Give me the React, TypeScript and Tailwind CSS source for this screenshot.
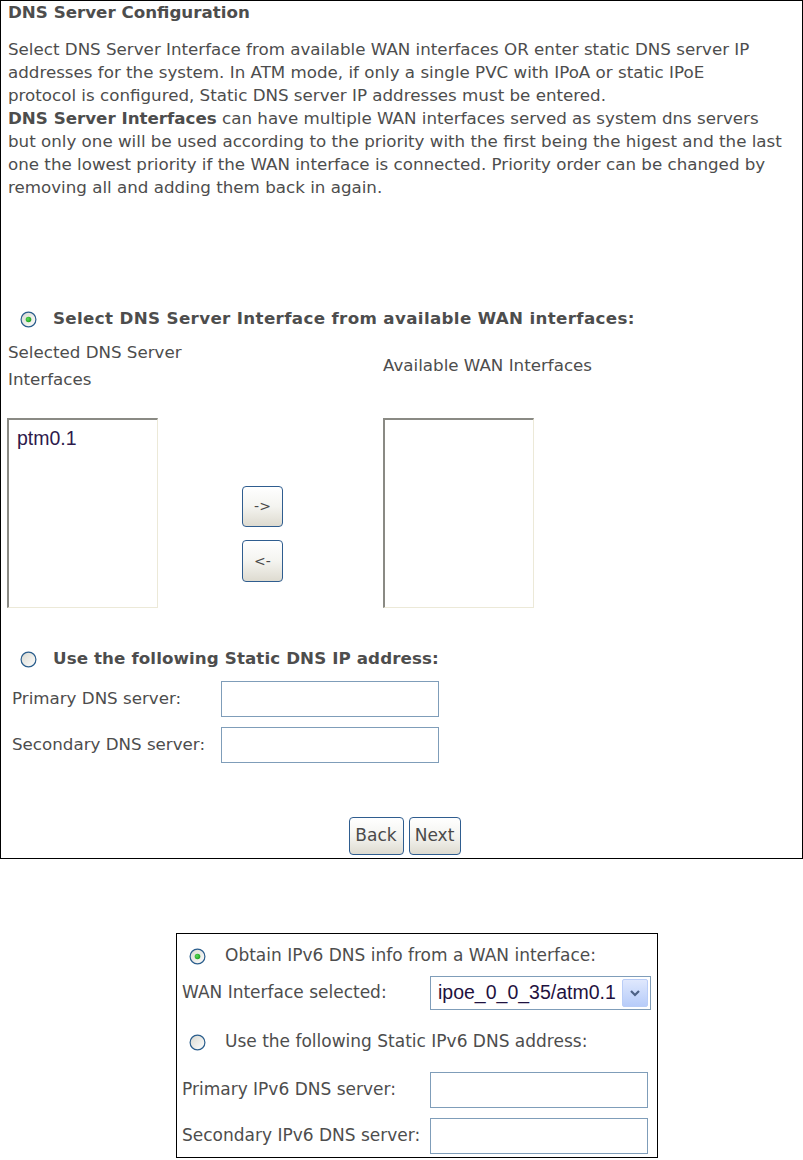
import React from "react";

const font = { fontFamily: '"DejaVu Sans", Verdana, Tahoma, sans-serif' };
const arial = { fontFamily: '"Liberation Sans", Arial, sans-serif' };

function Radio({ checked, id }: { checked?: boolean; id: string }) {
  return (
    <svg width="17" height="17" viewBox="0 0 17 17" className="shrink-0">
      <defs>
        <linearGradient id={`bg-${id}`} x1="0" y1="0" x2="1" y2="1">
          <stop offset="0" stopColor="#d8d8d0" />
          <stop offset="1" stopColor="#ffffff" />
        </linearGradient>
        <radialGradient id={`dot-${id}`} cx="0.4" cy="0.4" r="0.6">
          <stop offset="0" stopColor="#5ada5a" />
          <stop offset="1" stopColor="#21a121" />
        </radialGradient>
      </defs>
      <circle cx="8.5" cy="8.5" r="7.4" fill={`url(#bg-${id})`} stroke="#2a5d8c" strokeWidth="1.2" />
      {checked && <circle cx="8.5" cy="8.5" r="2.8" fill={`url(#dot-${id})`} />}
    </svg>
  );
}

function XpButton({ children, className }: { children: React.ReactNode; className: string }) {
  return (
    <div
      className={`flex items-center justify-center rounded-[4px] border border-[#2f5d8f] bg-gradient-to-b from-[#ffffff] via-[#f4f4f0] to-[#dedbd0] text-[#4a4a4a] ${className}`}
    >
      {children}
    </div>
  );
}

function ListBox({ items }: { items: string[] }) {
  return (
    <div className="w-[151px] h-[190px] bg-white border-l-2 border-t-2 border-r border-b border-l-[#8a8a84] border-t-[#8a8a84] border-r-[#ece9d8] border-b-[#ece9d8] pl-[8px] pt-[6px]">
      {items.map((it) => (
        <div key={it} className="text-[19.5px] leading-[24px] text-[#2e1a4c]" style={arial}>
          {it}
        </div>
      ))}
    </div>
  );
}

function TextBox({ className = "" }: { className?: string }) {
  return <div className={`w-[218px] h-[36px] border border-[#7f9db9] bg-white ${className}`} />;
}

export default function App() {
  return (
    <div className="w-[803px] h-[1160px] bg-white text-[#4d4d4d] text-[16.7px]" style={font}>
      {/* Box 1 */}
      <div className="w-[803px] h-[859px] border border-black flex flex-col">
        <div className="pl-[7px] leading-[22px] font-bold whitespace-nowrap">DNS Server Configuration</div>
        <div className="pl-[7px] mt-[15px] leading-[23px] whitespace-nowrap">
          <div>Select DNS Server Interface from available WAN interfaces OR enter static DNS server IP</div>
          <div>addresses for the system. In ATM mode, if only a single PVC with IPoA or static IPoE</div>
          <div>protocol is configured, Static DNS server IP addresses must be entered.</div>
          <div>
            <b>DNS Server Interfaces</b> can have multiple WAN interfaces served as system dns servers
          </div>
          <div>but only one will be used according to the priority with the first being the higest and the last</div>
          <div>one the lowest priority if the WAN interface is connected. Priority order can be changed by</div>
          <div>removing all and adding them back in again.</div>
        </div>

        <div className="mt-[108px] h-[24px] flex items-center pl-[19px] gap-[16px]">
          <Radio checked id="r1" />
          <span className="font-bold whitespace-nowrap tracking-[0.35px]">Select DNS Server Interface from available WAN interfaces:</span>
        </div>

        <div className="mt-[8px] flex items-center">
          <div className="w-[382px] pl-[7px] leading-[27px]">
            <div>Selected DNS Server</div>
            <div>Interfaces</div>
          </div>
          <div>Available WAN Interfaces</div>
        </div>

        <div className="mt-[25px] flex pl-[6px]">
          <div className="w-[235px]">
            <ListBox items={["ptm0.1"]} />
          </div>
          <div className="w-[141px] flex flex-col gap-[13px] pt-[68px]">
            <XpButton className="w-[41px] h-[41px] text-[14px]">-&gt;</XpButton>
            <XpButton className="w-[41px] h-[42px] text-[14px]">&lt;-</XpButton>
          </div>
          <div>
            <ListBox items={[]} />
          </div>
        </div>

        <div className="mt-[39px] h-[24px] flex items-center pl-[19px] gap-[16px]">
          <Radio id="r2" />
          <span className="font-bold whitespace-nowrap tracking-[0.1px]">Use the following Static DNS IP address:</span>
        </div>

        <div className="mt-[10px] flex items-center pl-[11px]">
          <div className="w-[209px] whitespace-nowrap">Primary DNS server:</div>
          <TextBox />
        </div>
        <div className="mt-[10px] flex items-center pl-[11px]">
          <div className="w-[209px] whitespace-nowrap">Secondary DNS server:</div>
          <TextBox className="h-[35px]" />
        </div>

        <div className="mt-[54px] flex justify-center gap-[5px] pl-[6px]">
          <XpButton className="w-[55px] h-[38px] text-[17px]">Back</XpButton>
          <XpButton className="w-[52px] h-[38px] text-[17px]">Next</XpButton>
        </div>
      </div>

      {/* Box 2 */}
      <div className="mt-[74px] ml-[176px] w-[482px] h-[225px] border border-black flex flex-col pt-[10px] text-[17px]">
        <div className="h-[24px] flex items-center pl-[12px] gap-[19px]">
          <Radio checked id="r3" />
          <span className="whitespace-nowrap">Obtain IPv6 DNS info from a WAN interface:</span>
        </div>
        <div className="mt-[8px] flex items-center pl-[5px]">
          <div className="w-[248px] whitespace-nowrap">WAN Interface selected:</div>
          <div className="w-[221px] h-[34px] border border-[#7f9db9] bg-white flex items-center justify-between pl-[7px] pr-[2px]">
            <span className="text-[19.5px] text-[#1f1240]" style={arial}>
              ipoe_0_0_35/atm0.1
            </span>
            <div className="w-[26px] h-[28px] rounded-[2px] border border-[#b9cdf7] bg-gradient-to-b from-[#dfe8fd] to-[#b7ccf9] flex items-center justify-center">
              <svg width="12" height="9" viewBox="0 0 12 9">
                <path d="M2 2 L6 6 L10 2" fill="none" stroke="#4d6185" strokeWidth="2.2" />
              </svg>
            </div>
          </div>
        </div>
        <div className="mt-[20px] h-[24px] flex items-center pl-[12px] gap-[19px]">
          <Radio id="r4" />
          <span className="whitespace-nowrap">Use the following Static IPv6 DNS address:</span>
        </div>
        <div className="mt-[18px] flex items-center pl-[5px]">
          <div className="w-[248px] whitespace-nowrap">Primary IPv6 DNS server:</div>
          <TextBox className="h-[35px]" />
        </div>
        <div className="mt-[10px] flex items-center pl-[5px]">
          <div className="w-[248px] whitespace-nowrap">Secondary IPv6 DNS server:</div>
          <TextBox className="h-[35px]" />
        </div>
      </div>
    </div>
  );
}
